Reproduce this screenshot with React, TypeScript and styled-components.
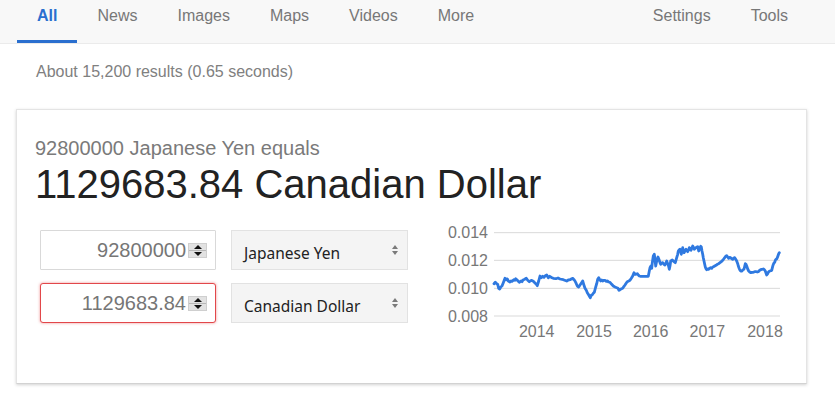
import React from "react";
import styled, { createGlobalStyle } from "styled-components";

const GlobalStyle = createGlobalStyle`
  html, body {
    margin: 0;
    padding: 0;
    background: #fff;
    font-family: Arial, "Liberation Sans", sans-serif;
  }
`;

const Page = styled.div`
  width: 835px;
  height: 400px;
  overflow: hidden;
  background: #fff;
`;

const NavBar = styled.nav`
  display: flex;
  align-items: stretch;
  height: 43px;
  padding: 0 27px 0 17px;
  background: #f8f8f8;
  border-bottom: 1px solid #ebebeb;
`;

const TabGroup = styled.div`
  display: flex;
  align-items: stretch;
`;

const Spacer = styled.div`
  flex: 1;
`;

const Tab = styled.a<{ $active?: boolean }>`
  display: flex;
  align-items: flex-start;
  padding: 6px 20px 0;
  font-size: 16px;
  line-height: 19px;
  color: ${(p) => (p.$active ? "#2a6fcf" : "#777")};
  font-weight: ${(p) => (p.$active ? "bold" : "normal")};
  border-bottom: 3px solid ${(p) => (p.$active ? "#2a6fcf" : "transparent")};
  text-decoration: none;
  cursor: pointer;
`;

const Stats = styled.div`
  margin: 18px 0 27px 36px;
  font-size: 16px;
  line-height: 20px;
  color: #808080;
`;

const Card = styled.section`
  margin-left: 16px;
  width: 791px;
  box-sizing: border-box;
  padding: 26px 18px 60px;
  background: #fff;
  border: 1px solid #e4e4e4;
  border-bottom-color: #d2d2d2;
  box-shadow: 0 1px 3px rgba(0, 0, 0, 0.18);
`;

const Lead = styled.div`
  font-size: 20px;
  line-height: 24px;
  color: #7a7a7a;
`;

const Result = styled.div`
  margin-top: 1px;
  font-size: 40px;
  line-height: 46px;
  color: #222;
`;

const Body = styled.div`
  display: flex;
  align-items: flex-start;
  margin-top: 23px;
  padding-left: 5px;
`;

const Converter = styled.div`
  display: grid;
  grid-template-columns: 176px 177px;
  grid-auto-rows: 40px;
  column-gap: 15px;
  row-gap: 13px;
`;

const Amount = styled.div<{ $invalid?: boolean }>`
  display: flex;
  align-items: center;
  justify-content: flex-end;
  gap: 2px;
  padding-right: 8px;
  box-sizing: border-box;
  background: #fff;
  border: 1px solid ${(p) => (p.$invalid ? "#e2474a" : "#d9d9d9")};
  border-radius: ${(p) => (p.$invalid ? "3px" : "1px")};
  box-shadow: ${(p) => (p.$invalid ? "0 0 3px rgba(226, 71, 74, 0.6)" : "none")};
  font-size: 20px;
  color: #767676;
`;

const Spinner = styled.span`
  display: flex;
  flex-direction: column;
  width: 19px;
  height: 15px;
  box-sizing: border-box;
  background: #e2e2e2;
  border: 1px solid #cfcfcf;
`;

const SpinHalf = styled.span<{ $down?: boolean }>`
  flex: 1;
  display: flex;
  align-items: center;
  justify-content: center;
  border-top: ${(p) => (p.$down ? "1px solid #b8b8b8" : "none")};

  &::after {
    content: "";
    border-left: 4.5px solid transparent;
    border-right: 4.5px solid transparent;
    ${(p) =>
      p.$down
        ? "border-top: 4px solid #111;"
        : "border-bottom: 4px solid #111;"}
  }
`;

const Select = styled.div`
  display: flex;
  align-items: center;
  justify-content: space-between;
  padding: 6px 9px 0 12px;
  box-sizing: border-box;
  background: #f4f4f4;
  border: 1px solid #e2e2e2;
  font-family: "Noto Sans", "Open Sans", sans-serif;
  font-size: 15.5px;
  color: #222;
`;

const Arrows = styled.span`
  display: flex;
  flex-direction: column;
  gap: 2px;
  margin-top: -6px;

  &::before,
  &::after {
    content: "";
    border-left: 3.5px solid transparent;
    border-right: 3.5px solid transparent;
  }
  &::before {
    border-bottom: 4px solid #7a7a7a;
  }
  &::after {
    border-top: 4px solid #7a7a7a;
  }
`;

/* The plot reaches a little above and below the converter rows
   without changing the card's height. */
const Chart = styled.svg`
  display: block;
  margin: -9px 0 -20px 32px;
  overflow: visible;
  font-family: Arial, "Liberation Sans", sans-serif;
  font-size: 16px;
`;

// Rate history sampled on a 3x grid: x runs 222..1080, y 95 (0.014) .. 345 (0.008)
const series: [number, number][] = [
  [222, 248], [226, 244], [229, 247], [233, 250], [236, 262], [239, 264], [242, 258],
  [246, 255], [250, 245], [255, 232], [259, 236], [262, 234], [265, 240], [270, 243],
  [273, 240], [276, 241], [282, 236], [285, 238], [287, 233], [292, 238], [298, 244],
  [303, 240], [306, 242], [309, 237], [314, 235], [319, 232], [323, 238], [328, 242],
  [334, 238], [340, 241], [345, 246], [349, 250], [352, 254], [356, 240], [360, 225],
  [364, 230], [368, 226], [372, 229], [376, 224], [380, 222], [385, 230], [389, 226],
  [392, 228], [396, 230], [400, 232], [408, 233], [414, 231], [420, 234], [430, 236],
  [440, 240], [445, 237], [450, 236], [455, 233], [458, 232], [462, 236], [465, 240],
  [469, 248], [472, 255], [476, 258], [480, 252], [485, 245], [488, 240], [491, 250],
  [495, 262], [499, 268], [502, 275], [505, 280], [508, 285], [511, 290], [514, 283],
  [517, 281], [520, 277], [523, 274], [527, 258], [530, 248], [533, 235], [536, 230],
  [539, 236], [542, 240], [545, 237], [548, 240], [552, 238], [555, 238], [559, 241],
  [562, 240], [566, 243], [570, 244], [575, 250], [580, 255], [585, 258], [590, 260],
  [594, 262], [597, 268], [600, 266], [603, 264], [608, 262], [612, 256], [615, 252],
  [619, 246], [622, 242], [626, 240], [630, 238], [634, 232], [638, 225], [642, 215],
  [645, 220], [648, 220], [652, 218], [655, 222], [658, 225], [662, 226], [670, 226],
  [678, 226], [685, 226], [688, 210], [690, 200], [692, 196], [695, 202], [697, 185],
  [700, 165], [703, 160], [705, 175], [707, 195], [710, 180], [714, 168], [718, 178],
  [720, 185], [722, 190], [725, 186], [728, 185], [732, 190], [735, 192], [738, 185],
  [740, 180], [743, 188], [745, 192], [748, 205], [750, 195], [752, 180], [755, 178],
  [757, 177], [760, 180], [762, 182], [766, 185], [770, 170], [773, 160], [775, 150],
  [778, 146], [780, 145], [782, 152], [784, 160], [786, 150], [788, 140], [790, 148],
  [792, 155], [795, 150], [798, 145], [800, 148], [803, 152], [806, 146], [808, 140],
  [811, 145], [813, 148], [816, 140], [818, 135], [821, 140], [823, 145], [826, 142],
  [828, 140], [831, 138], [833, 137], [836, 150], [838, 145], [840, 140], [842, 136],
  [844, 138], [846, 150], [848, 160], [850, 170], [852, 180], [854, 190], [856, 198],
  [858, 203], [860, 206], [863, 204], [866, 205], [869, 202], [872, 200], [875, 202],
  [878, 198], [881, 197], [884, 195], [888, 193], [892, 190], [896, 188], [900, 185],
  [904, 182], [908, 178], [911, 174], [914, 170], [917, 166], [920, 164], [923, 168],
  [926, 172], [929, 169], [932, 170], [935, 173], [938, 175], [941, 171], [944, 170],
  [947, 175], [950, 180], [953, 188], [955, 195], [958, 203], [960, 208], [963, 210],
  [966, 210], [969, 206], [972, 205], [974, 196], [976, 188], [978, 190], [980, 195],
  [983, 204], [986, 210], [989, 213], [992, 215], [996, 214], [1000, 214], [1004, 212],
  [1008, 212], [1012, 213], [1015, 212], [1019, 208], [1022, 206], [1026, 205],
  [1030, 204], [1033, 206], [1036, 210], [1038, 216], [1040, 222], [1043, 218],
  [1045, 214], [1048, 211], [1050, 210], [1053, 209], [1055, 208], [1058, 196],
  [1060, 190], [1062, 186], [1064, 184], [1066, 178], [1068, 175], [1070, 174],
  [1072, 170], [1074, 164], [1076, 158], [1078, 155],
];

const toPlot = (v: number) => v / 3 - 20;
const linePath = series
  .map(([x, y], i) => `${i ? "L" : "M"}${toPlot(x).toFixed(1)},${toPlot(y).toFixed(1)}`)
  .join(" ");

const gridRows = [
  { label: "0.014", y: toPlot(95) },
  { label: "0.012", y: toPlot(178) },
  { label: "0.010", y: toPlot(262) },
  { label: "0.008", y: toPlot(345) },
];

const years = [
  { label: "2014", x: 96.7 },
  { label: "2015", x: 154 },
  { label: "2016", x: 210.7 },
  { label: "2017", x: 267.3 },
  { label: "2018", x: 325 },
];

function RateChart() {
  return (
    <Chart width={350} height={122} viewBox="0 0 350 122">
      {gridRows.map((r) => (
        <g key={r.label}>
          <line x1={54} x2={340} y1={r.y} y2={r.y} stroke="#d9d9d9" strokeWidth={1} />
          <text x={48} y={r.y + 5.5} textAnchor="end" fill="#777">
            {r.label}
          </text>
        </g>
      ))}
      {years.map((t) => (
        <text key={t.label} x={t.x} y={115.5} textAnchor="middle" fill="#777">
          {t.label}
        </text>
      ))}
      <path
        d={linePath}
        fill="none"
        stroke="#2f79e0"
        strokeWidth={2.8}
        strokeLinejoin="round"
        strokeLinecap="round"
      />
    </Chart>
  );
}

function AmountField({ value, invalid }: { value: string; invalid?: boolean }) {
  return (
    <Amount $invalid={invalid}>
      <span>{value}</span>
      <Spinner>
        <SpinHalf />
        <SpinHalf $down />
      </Spinner>
    </Amount>
  );
}

function CurrencySelect({ name }: { name: string }) {
  return (
    <Select>
      <span>{name}</span>
      <Arrows />
    </Select>
  );
}

const tabs = ["All", "News", "Images", "Maps", "Videos", "More"];

export default function App() {
  return (
    <Page>
      <GlobalStyle />
      <NavBar>
        <TabGroup>
          {tabs.map((t, i) => (
            <Tab key={t} $active={i === 0}>
              {t}
            </Tab>
          ))}
        </TabGroup>
        <Spacer />
        <TabGroup>
          <Tab>Settings</Tab>
          <Tab>Tools</Tab>
        </TabGroup>
      </NavBar>
      <Stats>About 15,200 results (0.65 seconds)</Stats>
      <Card>
        <Lead>92800000 Japanese Yen equals</Lead>
        <Result>1129683.84 Canadian Dollar</Result>
        <Body>
          <Converter>
            <AmountField value="92800000" />
            <CurrencySelect name="Japanese Yen" />
            <AmountField value="1129683.84" invalid />
            <CurrencySelect name="Canadian Dollar" />
          </Converter>
          <RateChart />
        </Body>
      </Card>
    </Page>
  );
}
